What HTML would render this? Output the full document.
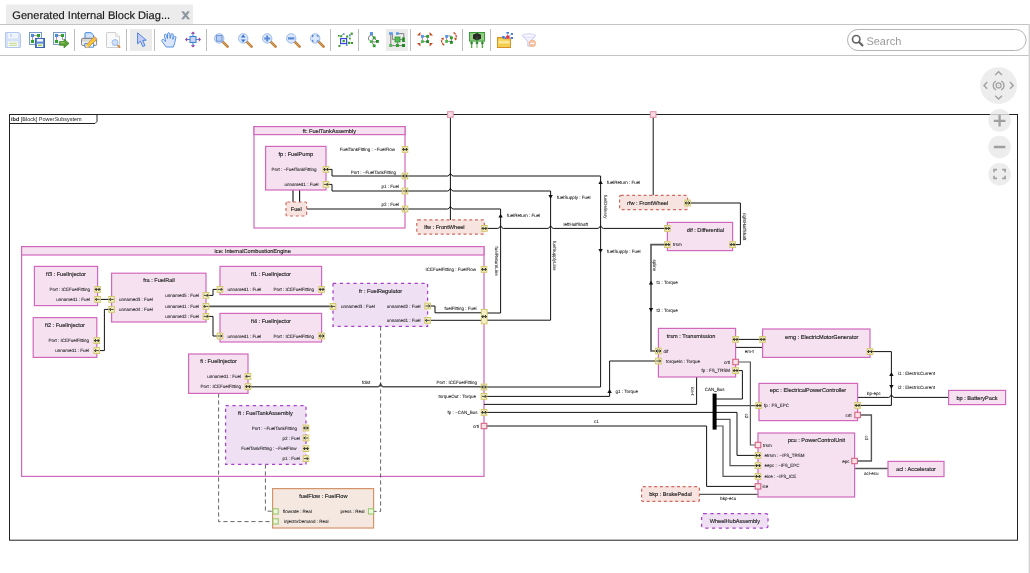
<!DOCTYPE html>
<html><head><meta charset="utf-8"><title>Generated Internal Block Diagram</title>
<style>html,body{margin:0;padding:0;background:#fff;overflow:hidden}body{width:1030px;height:573px;font-family:'Liberation Sans',sans-serif}svg{display:block}svg text{text-rendering:geometricPrecision;font-family:'Liberation Sans',sans-serif}</style></head><body>
<svg width="1030" height="573" viewBox="0 0 1030 573" style="will-change:transform">
<rect x="0" y="0" width="1030" height="573" fill="#fff"/>
<rect x="6" y="5" width="187" height="20" fill="#ececec"/>
<rect x="6" y="4" width="187" height="1" fill="#f7f7f7"/>
<text x="12.3" y="19" font-size="11.1" fill="#1c1c1c" stroke="#1c1c1c" stroke-width="0.18">Generated Internal Block Diag...</text>
<text x="181.4" y="19.1" font-size="13.6" font-weight="bold" fill="#8c949e" stroke="#8c949e" stroke-width="0.4" textLength="8.2" lengthAdjust="spacingAndGlyphs">x</text>
<rect x="0" y="24" width="1030" height="1" fill="#c4c4c4"/>
<rect x="0" y="55" width="1030" height="1" fill="#c4c4c4"/>
<rect x="1028.6" y="24" width="1.4" height="549" fill="#d2d2d2"/>
<rect x="130" y="29" width="22" height="22" fill="#ebebeb"/>
<rect x="386" y="29" width="22" height="22" fill="#ebebeb"/>
<rect x="74" y="29" width="1" height="22" fill="#bdbdbd"/>
<rect x="126" y="29" width="1" height="22" fill="#bdbdbd"/>
<rect x="154" y="29" width="1" height="22" fill="#bdbdbd"/>
<rect x="206" y="29" width="1" height="22" fill="#bdbdbd"/>
<rect x="330" y="29" width="1" height="22" fill="#bdbdbd"/>
<rect x="358" y="29" width="1" height="22" fill="#bdbdbd"/>
<rect x="410" y="29" width="1" height="22" fill="#bdbdbd"/>
<rect x="462" y="29" width="1" height="22" fill="#bdbdbd"/>
<rect x="490" y="29" width="1" height="22" fill="#bdbdbd"/>
<g transform="translate(5 32)"><path d="M0.5 1 Q0.5 0.5 1 0.5 H14 L15.5 2 V15 Q15.5 15.5 15 15.5 H1 Q0.5 15.5 0.5 15z" fill="#d5e1f7" stroke="#b3c6ee" stroke-width="1"/><rect x="3" y="1" width="10" height="5.5" fill="#eef3fc"/><rect x="5.3" y="2" width="1.2" height="3" fill="#b3c6ee"/><rect x="3" y="9.5" width="10" height="5.5" fill="#f6f9ee"/><rect x="4.2" y="10.8" width="7.6" height="1.1" fill="#c4dca0"/><rect x="4.2" y="12.8" width="7.6" height="1.1" fill="#c4dca0"/></g>
<g transform="translate(29 32)"><rect x="0.5" y="0.5" width="12" height="12" fill="#f4f7fc" stroke="#7e9bd0" stroke-width="1"/><path d="M3.5 3.5 H9.5 M3.5 3.5 V9.5 M9.5 3.5 V8" stroke="#a07070" stroke-width="0.7" fill="none"/><rect x="2" y="2" width="3" height="3" fill="#4a8ae0"/><rect x="8" y="2" width="3" height="3" fill="#2ea02e"/><rect x="2" y="8" width="3" height="3" fill="#2ea02e"/><rect x="6.5" y="6.5" width="9" height="9" fill="#5c86d4" stroke="#3c64b4" stroke-width="1"/><rect x="8" y="7" width="6" height="2.6" fill="#f4f7fc"/><rect x="8" y="11.6" width="6" height="3.4" fill="#f0f6e4"/><rect x="9" y="12.7" width="4" height="1.3" fill="#9acd50"/></g>
<g transform="translate(53 32)"><rect x="0.5" y="0.5" width="12" height="12" fill="#f4f7fc" stroke="#7e9bd0" stroke-width="1"/><path d="M3.5 3.5 H9.5 M3.5 3.5 V9.5 M9.5 3.5 V8" stroke="#a07070" stroke-width="0.7" fill="none"/><rect x="2" y="2" width="3" height="3" fill="#4a8ae0"/><rect x="8" y="2" width="3" height="3" fill="#2ea02e"/><rect x="2" y="8" width="3" height="3" fill="#2ea02e"/><path d="M6.5 9.6 H11 V7 L16 11.4 L11 15.8 V13.2 H6.5z" fill="#5aa032" stroke="#3c8420" stroke-width="0.8"/><path d="M7.6 10.8 H11.6" stroke="#a8d080" stroke-width="0.9"/></g>
<g transform="translate(81 32)"><path d="M4 7 V1.5 Q4 0.7 4.8 0.7 H10 L12.6 3.2 V7z" fill="#cfe2fa" stroke="#3f86d8" stroke-width="1"/><path d="M1.6 6.3 H14.6 Q15.6 6.3 15.6 7.3 V12.4 Q15.6 13.4 14.6 13.4 H1.6 Q0.6 13.4 0.6 12.4 V7.3 Q0.6 6.3 1.6 6.3z" fill="#d8d8d8" stroke="#707070" stroke-width="0.9"/><path d="M1 9.6 H15.2 V12.6 H1z" fill="#f4f4f4"/><path d="M3.8 11.4 H12.6 V15.2 H3.8z" fill="#f3f8fe" stroke="#3f86d8" stroke-width="0.9"/><path d="M13.6 4.6 L16 7 L8 15 L4.8 15.8 L5.6 12.6z" fill="#f4c63c" stroke="#d08a28" stroke-width="0.8"/><path d="M13.6 4.6 L16 7 L14.8 8.2 L12.4 5.8z" fill="#f0a880"/><path d="M5.6 12.6 L8 15 L4.8 15.8z" fill="#f6dcb0"/></g>
<g transform="translate(105 32)"><path d="M1.5 1.2 Q1.5 0.5 2.2 0.5 H10.5 L14.5 4.5 V14.8 Q14.5 15.5 13.8 15.5 H2.2 Q1.5 15.5 1.5 14.8z" fill="#fafafa" stroke="#cfcfcf" stroke-width="1"/><path d="M10.5 0.5 V4.5 H14.5" fill="#efefef" stroke="#d6d6d6" stroke-width="0.7"/><circle cx="10" cy="10.6" r="3" fill="#cfe0f8" stroke="#9cbcec" stroke-width="1"/><path d="M13 13.6 L14.6 15.2" stroke="#d0873c" stroke-width="1.8" stroke-linecap="round"/></g>
<g transform="translate(137 32)"><path d="M0.6 0.8 L0.6 11.8 L3.4 9.2 L5.8 14.6 L8 13.6 L5.7 8.4 L9.2 8.2z" fill="#c9cef5" stroke="#4a84e0" stroke-width="1" stroke-linejoin="round"/></g>
<g transform="translate(161 32)"><path d="M5.2 15 L1 9.4 Q0.2 8 1.4 7.4 Q2.4 7 3.2 8 L4.6 9.6 L3.4 3.6 Q3.2 2.4 4.2 2.2 Q5.2 2 5.6 3.2 L6.4 6.6 L6.6 1.8 Q6.7 0.7 7.7 0.7 Q8.7 0.7 8.8 1.8 L9.2 6.4 L10.2 2.4 Q10.5 1.4 11.4 1.6 Q12.3 1.8 12.2 2.9 L11.8 7.4 L13 4.8 Q13.5 3.9 14.3 4.2 Q15.1 4.6 14.9 5.6 L13.8 10.6 L12.4 15z" fill="#dce6fb" stroke="#4a86dc" stroke-width="0.9" stroke-linejoin="round"/></g>
<g transform="translate(185 31.5)"><path d="M8 1.4 V14.6 M1.4 8 H14.6" stroke="#3c8ad8" stroke-width="1.1"/><path d="M8 0 L10.2 2.2 H5.8z M8 16 L10.2 13.8 H5.8z M0 8 L2.2 5.8 V10.2z M16 8 L13.8 5.8 V10.2z" fill="#9c3c9c"/><rect x="5" y="5" width="6" height="6" fill="#cfd0f4" stroke="#3c8ad8" stroke-width="1.1"/></g>
<g transform="translate(214 33)"><path d="M8.6 8.6 L13.6 13.6" stroke="#b87830" stroke-width="2.6" stroke-linecap="round"/><path d="M9 9 L13.4 13.4" stroke="#e0a860" stroke-width="1" stroke-linecap="round"/><circle cx="5.2" cy="5.4" r="4.7" fill="#dbe8fb" stroke="#9cbcec" stroke-width="1"/><rect x="2.4" y="2.6" width="5.6" height="5.6" fill="#b8cdf2" stroke="#6c94d8" stroke-width="1"/></g>
<g transform="translate(238 33)"><path d="M8.6 8.6 L13.6 13.6" stroke="#b87830" stroke-width="2.6" stroke-linecap="round"/><path d="M9 9 L13.4 13.4" stroke="#e0a860" stroke-width="1" stroke-linecap="round"/><circle cx="5.2" cy="5.4" r="4.7" fill="#dbe8fb" stroke="#9cbcec" stroke-width="1"/><path d="M5.2 1.6 L7.6 4.4 H2.8z M5.2 9.2 L7.6 6.4 H2.8z" fill="#3a72cc"/></g>
<g transform="translate(262 33)"><path d="M8.6 8.6 L13.6 13.6" stroke="#b87830" stroke-width="2.6" stroke-linecap="round"/><path d="M9 9 L13.4 13.4" stroke="#e0a860" stroke-width="1" stroke-linecap="round"/><circle cx="5.2" cy="5.4" r="4.7" fill="#dbe8fb" stroke="#9cbcec" stroke-width="1"/><path d="M5.2 2.4 V8.4 M2.2 5.4 H8.2" stroke="#5888d4" stroke-width="2"/></g>
<g transform="translate(286 33)"><path d="M8.6 8.6 L13.6 13.6" stroke="#b87830" stroke-width="2.6" stroke-linecap="round"/><path d="M9 9 L13.4 13.4" stroke="#e0a860" stroke-width="1" stroke-linecap="round"/><circle cx="5.2" cy="5.4" r="4.7" fill="#dbe8fb" stroke="#9cbcec" stroke-width="1"/><path d="M2 5.4 H8.4" stroke="#5888d4" stroke-width="2.2"/></g>
<g transform="translate(310 33)"><path d="M8.6 8.6 L13.6 13.6" stroke="#b87830" stroke-width="2.6" stroke-linecap="round"/><path d="M9 9 L13.4 13.4" stroke="#e0a860" stroke-width="1" stroke-linecap="round"/><circle cx="5.2" cy="5.4" r="4.7" fill="#dbe8fb" stroke="#9cbcec" stroke-width="1"/><path d="M2 2.2 h2.2 l-2.2 2.2z M8.4 2.2 h-2.2 l2.2 2.2z M2 8.6 h2.2 l-2.2 -2.2z M8.4 8.6 h-2.2 l2.2 -2.2z" fill="#3a72cc"/></g>
<g transform="translate(338 32)"><path d="M1 14 L5 10 M9 4.5 L13.5 1.5 M9 4.5 L6 9 M11 10.8 L6 9 M5 2 L3 4.5 L0.6 3.8 M8.4 12.8 L11 10.8 L14 11" stroke="#5aa03c" stroke-width="0.8" fill="none" stroke-dasharray="1.4 1"/><rect x="2.2" y="3.2" width="2" height="2" fill="#3c9a30"/><rect x="0" y="3" width="1.6" height="1.6" fill="#3c9a30"/><rect x="8.2" y="3.6" width="2" height="2" fill="#3c9a30"/><rect x="12.6" y="0.6" width="2.2" height="2.2" fill="#3c9a30"/><rect x="11" y="2.6" width="1.8" height="1.8" fill="#5c8ed8"/><rect x="5" y="1.2" width="1.6" height="1.6" fill="#5c8ed8"/><rect x="10" y="9.8" width="2.2" height="2.2" fill="#3c9a30"/><rect x="13" y="10" width="2" height="2" fill="#3c9a30"/><rect x="0.4" y="13" width="2" height="2" fill="#3c9a30"/><rect x="8" y="12.4" width="1.6" height="1.6" fill="#5c8ed8"/><rect x="11" y="5.6" width="1.8" height="1.8" fill="#3c9a30"/><rect x="2.6" y="6.6" width="6" height="5" fill="#f4f6ff" stroke="#2c3ce0" stroke-width="1.1"/><rect x="4.6" y="8" width="2.2" height="2.2" fill="#3c9a30"/></g>
<g transform="translate(367 32)"><path d="M4.4 2.6 Q0 5 2.2 8.6 M4.4 2.6 L7 6 L4.4 9.6 L7 13.4 M4.4 9.6 L7.4 10 L10.6 9.4 L7 6" stroke="#555" stroke-width="0.8" fill="none"/><rect x="3.2" y="0.4" width="2.6" height="2.6" fill="#5a96e6" stroke="#3c78d0" stroke-width="0.5"/><rect x="5.8" y="4.4" width="2.8" height="2.8" fill="#2ea02e"/><rect x="2.8" y="8.2" width="2.8" height="2.8" fill="#4cb84c"/><rect x="9" y="8" width="2.8" height="2.8" fill="#1e8a1e"/><rect x="5.8" y="12.4" width="2.8" height="2.8" fill="#2ea02e"/></g>
<g transform="translate(389 32)"><path d="M1.8 1.6 V13.6 H15 M8.4 1.6 H14.8 V6 M3.4 2 V7.4 H8 M8.4 8 V13.6 M10 7.6 H13.6" stroke="#777" stroke-width="0.9" fill="none"/><rect x="0" y="0.2" width="3.8" height="2.6" fill="#5a9ae8"/><rect x="7" y="0.2" width="2.8" height="2.6" fill="#5a9ae8"/><rect x="6" y="5" width="5" height="5" fill="#58b858" stroke="#2e9a2e" stroke-width="0.8"/><rect x="13.2" y="5.4" width="2.6" height="4.6" fill="#1e8a1e"/><rect x="0.2" y="12" width="3" height="3" fill="#58b858"/><rect x="7" y="12" width="3" height="3" fill="#2ea02e"/><rect x="13" y="12" width="3" height="3" fill="#1e8a1e"/></g>
<g transform="translate(417 32)"><path d="M0 3.4 L3.4 0 V3.4z M16 3.4 L12.6 0 V3.4z M0 11 L3.4 14.4 V11z M16 11 L12.6 14.4 V11z" fill="#c8461e"/><path d="M5.4 4.4 H10.6 M5.4 4.4 V9.6 H10.6 V4.4" stroke="#666" stroke-width="0.7" fill="none"/><rect x="4" y="3" width="2.8" height="2.8" fill="#5a96e6"/><rect x="9.2" y="3" width="2.8" height="2.8" fill="#2ea02e"/><rect x="4" y="8.2" width="2.8" height="2.8" fill="#4cb84c"/><rect x="9.2" y="8.2" width="2.8" height="2.8" fill="#1e8a1e"/></g>
<g transform="translate(441 32)"><path d="M12.6 0.4 Q16.6 3.4 14.6 7" stroke="#c8461e" stroke-width="1.3" fill="none" stroke-dasharray="2.6 0.7"/><path d="M13.2 5.6 L16 7 L14 8.4z" fill="#c8461e"/><path d="M3.2 13.2 Q-0.8 10 1.4 6.4" stroke="#c8461e" stroke-width="1.3" fill="none" stroke-dasharray="2.6 0.7"/><path d="M0.2 6.6 L3 5.4 L2.4 8z" fill="#c8461e"/><path d="M5.6 4 H10.4 M5.6 4 V9.4 H10.4 V4.6" stroke="#666" stroke-width="0.7" fill="none"/><rect x="4.2" y="3" width="2.8" height="2.8" fill="#5a96e6"/><rect x="9" y="4.4" width="2.8" height="2.8" fill="#2ea02e"/><rect x="4.2" y="8" width="2.8" height="2.8" fill="#4cb84c"/><rect x="9" y="9" width="2.8" height="2.8" fill="#1e8a1e"/></g>
<g transform="translate(469 32)"><path d="M2.6 8 V16 M8 8 V16 M13.4 8 V16" stroke="#5aa84a" stroke-width="1.4"/><path d="M8 12 V16" stroke="#b8dcb0" stroke-width="1.8"/><circle cx="2.6" cy="11" r="1.3" fill="#2e8a2e"/><circle cx="8" cy="11" r="1.3" fill="#2e8a2e"/><circle cx="13.4" cy="11" r="1.3" fill="#2e8a2e"/><rect x="0.5" y="0.5" width="15" height="8.6" fill="#8fd080" stroke="#3c9a3c" stroke-width="1"/><path d="M8 1 L12 2.8 V6.8 L8 8.6 L4 6.8 V2.8z" fill="#2a2a2a"/><path d="M8 4.6 V8.4" stroke="#3c7c3c" stroke-width="0.8"/></g>
<g transform="translate(497 32)"><path d="M0.6 5.6 H5.4 L6.4 6.8 H13.4 V15.4 H0.6z" fill="#f6d65c" stroke="#d89020" stroke-width="1.1"/><path d="M1.6 9 H12.6 V14.6 H1.6z" fill="#fbe89c"/><path d="M1.6 11.6 H12.6 V14.6 H1.6z" fill="#f4cc48"/><path d="M10.6 5.2 L10.6 0.8 M10.6 5.2 L6.4 5.2 M10.6 5.2 L15 1.8 M10.6 5.2 L15 6" stroke="#6c8cd0" stroke-width="0.6"/><rect x="9.4" y="0" width="2.6" height="1.6" fill="#3c78d8"/><rect x="14" y="1" width="2" height="1.8" fill="#3c78d8"/><rect x="14" y="5" width="2" height="2" fill="#3c78d8"/><rect x="5.2" y="4" width="2.4" height="2.2" fill="#3c78d8"/><rect x="7.6" y="5.4" width="1.6" height="1.6" fill="#3c78d8"/><circle cx="10.8" cy="5" r="1.8" fill="#f02c3c"/></g>
<g transform="translate(521 32)"><path d="M1.2 3.4 Q8 0.4 14.8 3.4 L9.4 9.6 V14.2 H6.8 V9.6z" fill="#f3f3ff" stroke="#c4c4f4" stroke-width="1"/><ellipse cx="8" cy="3.6" rx="6.4" ry="1.6" fill="#fafaff" stroke="#d0d0f8" stroke-width="0.7"/><circle cx="11.4" cy="11.4" r="3.2" fill="#f6c4a4" stroke="#f0a880" stroke-width="0.8"/><rect x="9.4" y="10.8" width="4" height="1.3" fill="#fff"/></g>
<rect x="847.5" y="29.5" width="178.6" height="21" rx="10.5" fill="#fff" stroke="#b4b4b4" stroke-width="1"/>
<circle cx="856.2" cy="39.2" r="3.7" fill="none" stroke="#666" stroke-width="1.7"/><path d="M859 42 L862.4 45.4" stroke="#666" stroke-width="2.2" stroke-linecap="round"/>
<text x="866.4" y="44.8" font-size="11" fill="#9a9a9a">Search</text>
<g id="diagram">
<rect x="9.50" y="114.50" width="1008.00" height="425.70" fill="none" stroke="#222" stroke-width="1"/>
<path d="M9.5 123.5 H95 L97 121.5 V114.5" fill="none" stroke="#222" stroke-width="1"/>
<text x="11" y="121.2" font-size="5.5" fill="#222"><tspan font-weight="bold">ibd</tspan> [Block] PowerSubsystem</text>
<rect x="254.00" y="126.60" width="151.00" height="101.40" fill="#fff" stroke="#d268bc" stroke-width="1.2"/>
<rect x="254.00" y="126.60" width="151.00" height="8.00" fill="#f5e1f0" stroke="#d268bc" stroke-width="1.2"/>
<text x="329.40" y="132.82" font-size="5.6" text-anchor="middle" stroke="#222" stroke-width="0.14" fill="#222">ft: FuelTankAssembly</text>
<path d="M326.00 169.40 L332.00 169.40 L332.00 176.00 L405.00 176.00" fill="none" stroke="#111" stroke-width="1" stroke-linejoin="miter"/>
<path d="M326.00 184.40 L332.00 184.40 L332.00 191.00 L405.00 191.00" fill="none" stroke="#111" stroke-width="1" stroke-linejoin="miter"/>
<path d="M293.00 190.00 L293.00 202.00" fill="none" stroke="#111" stroke-width="1.1" stroke-linejoin="miter"/>
<path d="M299.60 190.00 L299.60 202.00" fill="none" stroke="#111" stroke-width="1.1" stroke-linejoin="miter"/>
<path d="M306.60 209.00 L405.00 209.00" fill="none" stroke="#111" stroke-width="1" stroke-linejoin="miter"/>
<rect x="265.60" y="146.40" width="60.40" height="43.60" fill="#f5e1f0" stroke="#d268bc" stroke-width="1.2"/>
<text x="295.80" y="156.02" font-size="5.6" text-anchor="middle" stroke="#222" stroke-width="0.14" fill="#222">fp : FuelPump</text>
<text x="316.60" y="171.02" font-size="4.5" text-anchor="end" stroke="#222" stroke-width="0.07" fill="#222">Port : ~FuelTankFitting</text>
<text x="318.40" y="186.02" font-size="4.5" text-anchor="end" stroke="#222" stroke-width="0.07" fill="#222">unnamed1 : Fuel</text>
<rect x="286.00" y="202.00" width="20.60" height="14.00" fill="#f7e3e0" stroke="#cf6a5c" stroke-width="1.2" stroke-dasharray="3 2.7" rx="1.2"/>
<text x="296.30" y="211.02" font-size="5.6" text-anchor="middle" stroke="#222" stroke-width="0.14" fill="#222">Fuel</text>
<text x="395.00" y="151.02" font-size="4.5" text-anchor="end" stroke="#222" stroke-width="0.07" fill="#222">FuelTankFitting : ~FuelFlow</text>
<text x="396.00" y="173.62" font-size="4.5" text-anchor="end" stroke="#222" stroke-width="0.07" fill="#222">Port : ~FuelTankFitting</text>
<text x="399.00" y="188.02" font-size="4.5" text-anchor="end" stroke="#222" stroke-width="0.07" fill="#222">p1 : Fuel</text>
<text x="399.00" y="206.42" font-size="4.5" text-anchor="end" stroke="#222" stroke-width="0.07" fill="#222">p2 : Fuel</text>
<path d="M450.40 114.50 L450.40 220.00" fill="none" stroke="#111" stroke-width="1" stroke-linejoin="miter"/>
<path d="M653.20 114.50 L653.20 195.40" fill="none" stroke="#111" stroke-width="1" stroke-linejoin="miter"/>
<path d="M405.00 176.00 L447.70 176.00 Q449.10 176.00 450.40 173.30 Q451.70 176.00 453.10 176.00 L600.60 176.00 L600.60 387.00 L484.00 387.00" fill="none" stroke="#111" stroke-width="1" stroke-linejoin="miter"/>
<path d="M405.00 191.00 L447.70 191.00 Q449.10 191.00 450.40 188.30 Q451.70 191.00 453.10 191.00 L550.60 191.00 L550.60 320.20 L484.00 320.20" fill="none" stroke="#111" stroke-width="1" stroke-linejoin="miter"/>
<path d="M405.00 209.00 L447.70 209.00 Q449.10 209.00 450.40 206.30 Q451.70 209.00 453.10 209.00 L500.60 209.00 L500.60 313.00 L484.00 313.00" fill="none" stroke="#111" stroke-width="1" stroke-linejoin="miter"/>
<path d="M484.00 228.40 L497.90 228.40 Q499.30 228.40 500.60 225.70 Q501.90 228.40 503.30 228.40 L547.90 228.40 Q549.30 228.40 550.60 225.70 Q551.90 228.40 553.30 228.40 L597.90 228.40 Q599.30 228.40 600.60 225.70 Q601.90 228.40 603.30 228.40 L667.40 228.40" fill="none" stroke="#111" stroke-width="1" stroke-linejoin="miter"/>
<path d="M687.60 203.00 L740.40 203.00 L740.40 244.60 L732.60 244.60" fill="none" stroke="#111" stroke-width="1" stroke-linejoin="miter"/>
<path d="M667.40 244.60 L651.00 244.60 L651.00 351.00 L658.40 351.00" fill="none" stroke="#555" stroke-width="1.6" stroke-linejoin="miter"/>
<path d="M600.60 180.05 l2.2 3.9 h-4.4z" fill="#111"/>
<text x="607.00" y="183.62" font-size="4.5" text-anchor="start" stroke="#222" stroke-width="0.07" fill="#222">fuelReturn : Fuel</text>
<path d="M600.60 252.95 l2.2 -3.9 h-4.4z" fill="#111"/>
<text x="607.00" y="252.82" font-size="4.5" text-anchor="start" stroke="#222" stroke-width="0.07" fill="#222">fuelSupply : Fuel</text>
<path d="M550.60 198.95 l2.2 -3.9 h-4.4z" fill="#111"/>
<text x="557.00" y="199.02" font-size="4.5" text-anchor="start" stroke="#222" stroke-width="0.07" fill="#222">fuelSupply : Fuel</text>
<path d="M500.60 213.65 l2.2 3.9 h-4.4z" fill="#111"/>
<text x="507.00" y="217.02" font-size="4.5" text-anchor="start" stroke="#222" stroke-width="0.07" fill="#222">fuelReturn : Fuel</text>
<path d="M651.00 280.65 l2.2 3.9 h-4.4z" fill="#111"/>
<text x="656.60" y="284.22" font-size="4.5" text-anchor="start" stroke="#222" stroke-width="0.07" fill="#222">t1 : Torque</text>
<path d="M651.00 311.95 l2.2 -3.9 h-4.4z" fill="#111"/>
<text x="656.60" y="311.82" font-size="4.5" text-anchor="start" stroke="#222" stroke-width="0.07" fill="#222">t2 : Torque</text>
<text x="575.70" y="225.62" font-size="4.5" text-anchor="middle" stroke="#222" stroke-width="0.07" fill="#222">leftHalfShaft</text>
<text x="605.60" y="208.32" font-size="4.5" text-anchor="middle" stroke="#222" stroke-width="0.07" fill="#222" transform="rotate(90 605.60 206.70)">fuelDelivery</text>
<text x="496.40" y="262.82" font-size="4.5" text-anchor="middle" stroke="#222" stroke-width="0.07" fill="#222" transform="rotate(90 496.40 261.20)">fuelReturnLine</text>
<text x="554.50" y="257.32" font-size="4.5" text-anchor="middle" stroke="#222" stroke-width="0.07" fill="#222" transform="rotate(90 554.50 255.70)">fuelSupplyLine</text>
<text x="744.40" y="228.22" font-size="4.5" text-anchor="middle" stroke="#222" stroke-width="0.07" fill="#222" transform="rotate(90 744.40 226.60)">rightHalfShaft</text>
<text x="655.00" y="267.02" font-size="4.5" text-anchor="middle" stroke="#222" stroke-width="0.07" fill="#222" transform="rotate(90 655.00 265.40)">spline</text>
<rect x="416.80" y="219.90" width="67.50" height="14.20" fill="#f7e3e0" stroke="#cf6a5c" stroke-width="1.2" stroke-dasharray="3 2.7" rx="1.2"/>
<text x="444.40" y="229.12" font-size="5.6" text-anchor="middle" stroke="#222" stroke-width="0.14" fill="#222">lfw : FrontWheel</text>
<rect x="619.60" y="195.40" width="68.00" height="14.20" fill="#f7e3e0" stroke="#cf6a5c" stroke-width="1.2" stroke-dasharray="3 2.7" rx="1.2"/>
<text x="647.60" y="205.02" font-size="5.6" text-anchor="middle" stroke="#222" stroke-width="0.14" fill="#222">rfw : FrontWheel</text>
<rect x="667.40" y="222.40" width="65.20" height="28.20" fill="#f5e1f0" stroke="#d268bc" stroke-width="1.2"/>
<text x="705.40" y="232.02" font-size="5.6" text-anchor="middle" stroke="#222" stroke-width="0.14" fill="#222">dif : Differential</text>
<text x="673.00" y="246.22" font-size="4.5" text-anchor="start" stroke="#222" stroke-width="0.07" fill="#222">trsm</text>
<rect x="21.60" y="246.60" width="462.40" height="229.80" fill="#fff" stroke="#d268bc" stroke-width="1.2"/>
<rect x="21.60" y="246.60" width="462.40" height="8.40" fill="#f5e1f0" stroke="#d268bc" stroke-width="1.2"/>
<text x="252.70" y="252.62" font-size="5.6" text-anchor="middle" stroke="#222" stroke-width="0.14" fill="#222">ice: InternalCombustionEngine</text>
<path d="M97.60 299.40 L111.60 299.40" fill="none" stroke="#111" stroke-width="1" stroke-linejoin="miter"/>
<path d="M96.80 350.60 L104.40 350.60 L104.40 309.40 L111.60 309.40" fill="none" stroke="#111" stroke-width="1" stroke-linejoin="miter"/>
<path d="M206.00 295.40 L213.00 295.40 L213.00 289.40 L220.00 289.40" fill="none" stroke="#111" stroke-width="1" stroke-linejoin="miter"/>
<path d="M206.00 306.40 L333.00 306.40" fill="none" stroke="#555" stroke-width="1.6" stroke-linejoin="miter"/>
<path d="M206.00 316.40 L213.00 316.40 L213.00 336.00 L220.00 336.00" fill="none" stroke="#111" stroke-width="1" stroke-linejoin="miter"/>
<path d="M427.60 306.00 L435.00 306.00 L435.00 312.80 L484.00 312.80" fill="none" stroke="#111" stroke-width="1" stroke-linejoin="miter"/>
<path d="M427.60 320.30 L484.00 320.30" fill="none" stroke="#111" stroke-width="1" stroke-linejoin="miter"/>
<path d="M248.00 386.80 L377.90 386.80 Q379.30 386.80 380.60 384.10 Q381.90 386.80 383.30 386.80 L484.00 386.80" fill="none" stroke="#555" stroke-width="1.6" stroke-linejoin="miter"/>
<path d="M380.60 326.40 L380.60 511.40 L373.60 511.40" fill="none" stroke="#333" stroke-width="0.75" stroke-dasharray="4.2 2.8" stroke-linejoin="miter"/>
<path d="M218.60 393.40 L218.60 521.60 L272.60 521.60" fill="none" stroke="#333" stroke-width="0.75" stroke-dasharray="4.2 2.8" stroke-linejoin="miter"/>
<path d="M265.40 464.40 L265.40 511.20 L272.60 511.20" fill="none" stroke="#333" stroke-width="0.75" stroke-dasharray="4.2 2.8" stroke-linejoin="miter"/>
<rect x="34.40" y="266.40" width="63.20" height="39.20" fill="#f5e1f0" stroke="#d268bc" stroke-width="1.2"/>
<text x="66.00" y="276.02" font-size="5.6" text-anchor="middle" stroke="#222" stroke-width="0.14" fill="#222">fi3 : FuelInjector</text>
<text x="90.00" y="291.02" font-size="4.5" text-anchor="end" stroke="#222" stroke-width="0.07" fill="#222">Port : ICEFuelFitting</text>
<text x="90.00" y="301.02" font-size="4.5" text-anchor="end" stroke="#222" stroke-width="0.07" fill="#222">unnamed1 : Fuel</text>
<rect x="33.20" y="317.60" width="63.60" height="39.80" fill="#f5e1f0" stroke="#d268bc" stroke-width="1.2"/>
<text x="65.00" y="327.02" font-size="5.6" text-anchor="middle" stroke="#222" stroke-width="0.14" fill="#222">fi2 : FuelInjector</text>
<text x="89.00" y="342.22" font-size="4.5" text-anchor="end" stroke="#222" stroke-width="0.07" fill="#222">Port : ICEFuelFitting</text>
<text x="89.00" y="352.22" font-size="4.5" text-anchor="end" stroke="#222" stroke-width="0.07" fill="#222">unnamed1 : Fuel</text>
<rect x="111.60" y="273.20" width="94.40" height="48.80" fill="#f5e1f0" stroke="#d268bc" stroke-width="1.2"/>
<text x="159.00" y="282.02" font-size="5.6" text-anchor="middle" stroke="#222" stroke-width="0.14" fill="#222">fra : FuelRail</text>
<text x="119.00" y="301.02" font-size="4.5" text-anchor="start" stroke="#222" stroke-width="0.07" fill="#222">unnamed3 : Fuel</text>
<text x="119.00" y="311.22" font-size="4.5" text-anchor="start" stroke="#222" stroke-width="0.07" fill="#222">unnamed4 : Fuel</text>
<text x="199.00" y="297.02" font-size="4.5" text-anchor="end" stroke="#222" stroke-width="0.07" fill="#222">unnamed5 : Fuel</text>
<text x="199.00" y="308.02" font-size="4.5" text-anchor="end" stroke="#222" stroke-width="0.07" fill="#222">unnamed1 : Fuel</text>
<text x="199.00" y="318.02" font-size="4.5" text-anchor="end" stroke="#222" stroke-width="0.07" fill="#222">unnamed2 : Fuel</text>
<rect x="220.00" y="266.40" width="101.60" height="28.20" fill="#f5e1f0" stroke="#d268bc" stroke-width="1.2"/>
<text x="271.00" y="276.02" font-size="5.6" text-anchor="middle" stroke="#222" stroke-width="0.14" fill="#222">fi1 : FuelInjector</text>
<text x="227.40" y="291.02" font-size="4.5" text-anchor="start" stroke="#222" stroke-width="0.07" fill="#222">unnamed1 : Fuel</text>
<text x="314.00" y="291.02" font-size="4.5" text-anchor="end" stroke="#222" stroke-width="0.07" fill="#222">Port : ICEFuelFitting</text>
<rect x="220.00" y="313.40" width="101.60" height="28.60" fill="#f5e1f0" stroke="#d268bc" stroke-width="1.2"/>
<text x="271.00" y="323.02" font-size="5.6" text-anchor="middle" stroke="#222" stroke-width="0.14" fill="#222">fi4 : FuelInjector</text>
<text x="227.40" y="337.62" font-size="4.5" text-anchor="start" stroke="#222" stroke-width="0.07" fill="#222">unnamed1 : Fuel</text>
<text x="314.00" y="337.62" font-size="4.5" text-anchor="end" stroke="#222" stroke-width="0.07" fill="#222">Port : ICEFuelFitting</text>
<rect x="333.00" y="283.40" width="94.60" height="43.00" fill="#efe0f4" stroke="#a840cc" stroke-width="1.25" stroke-dasharray="3.2 3.6"/>
<text x="380.60" y="293.02" font-size="5.6" text-anchor="middle" stroke="#222" stroke-width="0.14" fill="#222">fr : FuelRegulator</text>
<text x="341.00" y="308.02" font-size="4.5" text-anchor="start" stroke="#222" stroke-width="0.07" fill="#222">unnamed3 : Fuel</text>
<text x="420.60" y="307.82" font-size="4.5" text-anchor="end" stroke="#222" stroke-width="0.07" fill="#222">unnamed2 : Fuel</text>
<text x="420.60" y="322.02" font-size="4.5" text-anchor="end" stroke="#222" stroke-width="0.07" fill="#222">unnamed1 : Fuel</text>
<rect x="188.60" y="354.00" width="59.40" height="39.40" fill="#f5e1f0" stroke="#d268bc" stroke-width="1.2"/>
<text x="218.50" y="363.02" font-size="5.6" text-anchor="middle" stroke="#222" stroke-width="0.14" fill="#222">fi : FuelInjector</text>
<text x="241.00" y="378.02" font-size="4.5" text-anchor="end" stroke="#222" stroke-width="0.07" fill="#222">unnamed1 : Fuel</text>
<text x="241.00" y="388.22" font-size="4.5" text-anchor="end" stroke="#222" stroke-width="0.07" fill="#222">Port : ICEFuelFitting</text>
<rect x="225.60" y="405.60" width="80.40" height="58.80" fill="#efe0f4" stroke="#a840cc" stroke-width="1.25" stroke-dasharray="3.2 3.6"/>
<text x="265.40" y="415.02" font-size="5.6" text-anchor="middle" stroke="#222" stroke-width="0.14" fill="#222">ft : FuelTankAssembly</text>
<text x="297.00" y="429.62" font-size="4.5" text-anchor="end" stroke="#222" stroke-width="0.07" fill="#222">Port : ~FuelTankFitting</text>
<text x="300.00" y="439.62" font-size="4.5" text-anchor="end" stroke="#222" stroke-width="0.07" fill="#222">p2 : Fuel</text>
<text x="296.40" y="450.22" font-size="4.5" text-anchor="end" stroke="#222" stroke-width="0.07" fill="#222">FuelTankFitting : ~FuelFlow</text>
<text x="300.00" y="460.22" font-size="4.5" text-anchor="end" stroke="#222" stroke-width="0.07" fill="#222">p1 : Fuel</text>
<text x="476.00" y="271.02" font-size="4.5" text-anchor="end" stroke="#222" stroke-width="0.07" fill="#222">ICEFuelFitting : FuelFlow</text>
<text x="476.60" y="309.82" font-size="4.5" text-anchor="end" stroke="#222" stroke-width="0.07" fill="#222">fuelFitting : Fuel</text>
<text x="477.00" y="383.82" font-size="4.5" text-anchor="end" stroke="#222" stroke-width="0.07" fill="#222">Port : ICEFuelFitting</text>
<text x="476.00" y="398.02" font-size="4.5" text-anchor="end" stroke="#222" stroke-width="0.07" fill="#222">torqueOut : Torque</text>
<text x="477.40" y="414.02" font-size="4.5" text-anchor="end" stroke="#222" stroke-width="0.07" fill="#222">fp : ~CAN_Bus</text>
<text x="479.00" y="427.62" font-size="4.5" text-anchor="end" stroke="#222" stroke-width="0.07" fill="#222">crtl</text>
<text x="366.20" y="383.82" font-size="4.5" text-anchor="middle" stroke="#222" stroke-width="0.07" fill="#222">fdist</text>
<rect x="272.60" y="488.60" width="101.00" height="39.40" fill="#f5e8e0" stroke="#d4946a" stroke-width="1.2"/>
<text x="323.40" y="498.02" font-size="5.6" text-anchor="middle" stroke="#222" stroke-width="0.14" fill="#222">fuelFlow : FuelFlow</text>
<text x="283.00" y="513.02" font-size="4.5" text-anchor="start" stroke="#222" stroke-width="0.07" fill="#222">flowrate : Real</text>
<text x="284.00" y="523.02" font-size="4.5" text-anchor="start" stroke="#222" stroke-width="0.07" fill="#222">injectorDemand : Real</text>
<text x="364.60" y="513.02" font-size="4.5" text-anchor="end" stroke="#222" stroke-width="0.07" fill="#222">press : Real</text>
<path d="M484.00 396.40 L609.60 396.40 L609.60 361.00 L658.40 361.00" fill="none" stroke="#111" stroke-width="1" stroke-linejoin="miter"/>
<path d="M609.60 389.05 l2.2 3.9 h-4.4z" fill="#111"/>
<text x="615.60" y="392.62" font-size="4.5" text-anchor="start" stroke="#222" stroke-width="0.07" fill="#222">g1 : Torque</text>
<path d="M484.00 404.40 L696.60 404.40 L696.60 377.00" fill="none" stroke="#111" stroke-width="1" stroke-linejoin="miter"/>
<path d="M484.00 412.40 L737.00 412.40 L737.00 455.40 L758.00 455.40" fill="none" stroke="#111" stroke-width="1" stroke-linejoin="miter"/>
<path d="M484.00 426.00 L706.60 426.00 L706.60 486.40 L758.00 486.40" fill="none" stroke="#111" stroke-width="1" stroke-linejoin="miter"/>
<text x="596.50" y="423.42" font-size="4.5" text-anchor="middle" stroke="#222" stroke-width="0.07" fill="#222">c1</text>
<path d="M735.60 339.40 L762.60 339.40" fill="none" stroke="#111" stroke-width="1" stroke-linejoin="miter"/>
<path d="M735.60 347.40 L762.60 347.40" fill="none" stroke="#111" stroke-width="1" stroke-linejoin="miter"/>
<text x="749.30" y="353.22" font-size="4.5" text-anchor="middle" stroke="#222" stroke-width="0.07" fill="#222">em-t</text>
<path d="M735.60 370.60 L742.40 370.60 L742.40 399.00 L714.60 399.00" fill="none" stroke="#111" stroke-width="1" stroke-linejoin="miter"/>
<path d="M735.60 362.00 L750.40 362.00 L750.40 445.00 L758.00 445.00" fill="none" stroke="#555" stroke-width="1.2" stroke-linejoin="miter"/>
<text x="746.40" y="417.62" font-size="4.5" text-anchor="middle" stroke="#222" stroke-width="0.07" fill="#222" transform="rotate(90 746.40 416.00)">c2</text>
<path d="M714.60 405.60 L758.60 405.60" fill="none" stroke="#555" stroke-width="1.4" stroke-linejoin="miter"/>
<path d="M714.60 419.40 L730.00 419.40 L730.00 465.60 L758.00 465.60" fill="none" stroke="#555" stroke-width="1.2" stroke-linejoin="miter"/>
<path d="M714.60 426.00 L723.00 426.00 L723.00 476.40 L758.00 476.40" fill="none" stroke="#555" stroke-width="1.2" stroke-linejoin="miter"/>
<path d="M699.40 494.40 L758.00 494.40" fill="none" stroke="#555" stroke-width="1.2" stroke-linejoin="miter"/>
<text x="728.30" y="500.22" font-size="4.5" text-anchor="middle" stroke="#222" stroke-width="0.07" fill="#222">bkp-ecu</text>
<path d="M870.00 351.60 L891.40 351.60 L891.40 405.40 L857.60 405.40" fill="none" stroke="#111" stroke-width="1" stroke-linejoin="miter"/>
<path d="M891.40 372.05 l2.2 3.9 h-4.4z" fill="#111"/>
<text x="898.00" y="375.12" font-size="4.5" text-anchor="start" stroke="#222" stroke-width="0.07" fill="#222">i1 : ElectricCurrent</text>
<path d="M891.40 388.95 l2.2 -3.9 h-4.4z" fill="#111"/>
<text x="898.00" y="388.82" font-size="4.5" text-anchor="start" stroke="#222" stroke-width="0.07" fill="#222">i2 : ElectricCurrent</text>
<path d="M857.60 397.40 L888.70 397.40 Q890.10 397.40 891.40 394.70 Q892.70 397.40 894.10 397.40 L948.60 397.40" fill="none" stroke="#111" stroke-width="1" stroke-linejoin="miter"/>
<text x="874.00" y="395.02" font-size="4.5" text-anchor="middle" stroke="#222" stroke-width="0.07" fill="#222">bp-epc</text>
<path d="M857.60 415.00 L871.40 415.00 L871.40 461.00 L854.60 461.00" fill="none" stroke="#555" stroke-width="1.4" stroke-linejoin="miter"/>
<text x="866.40" y="439.62" font-size="4.5" text-anchor="middle" stroke="#222" stroke-width="0.07" fill="#222" transform="rotate(90 866.40 438.00)">c3</text>
<path d="M854.60 468.60 L888.00 468.60" fill="none" stroke="#555" stroke-width="1.5" stroke-linejoin="miter"/>
<text x="871.20" y="475.02" font-size="4.5" text-anchor="middle" stroke="#222" stroke-width="0.07" fill="#222">acl-ecu</text>
<text x="692.60" y="392.92" font-size="4.5" text-anchor="middle" stroke="#222" stroke-width="0.07" fill="#222" transform="rotate(90 692.60 391.30)">ice-t</text>
<rect x="712.60" y="393.60" width="4.00" height="36.00" fill="#000" stroke="none" stroke-width="0"/>
<text x="714.70" y="391.02" font-size="4.5" text-anchor="middle" stroke="#222" stroke-width="0.07" fill="#222">CAN_Bus</text>
<rect x="658.40" y="328.40" width="77.20" height="48.60" fill="#f5e1f0" stroke="#d268bc" stroke-width="1.2"/>
<text x="691.00" y="338.02" font-size="5.6" text-anchor="middle" stroke="#222" stroke-width="0.14" fill="#222">trsm : Transmission</text>
<text x="663.40" y="352.62" font-size="4.5" text-anchor="start" stroke="#222" stroke-width="0.07" fill="#222">dif</text>
<text x="666.00" y="362.62" font-size="4.5" text-anchor="start" stroke="#222" stroke-width="0.07" fill="#222">torqueIn : Torque</text>
<text x="730.00" y="363.62" font-size="4.5" text-anchor="end" stroke="#222" stroke-width="0.07" fill="#222">crtl</text>
<text x="730.00" y="372.22" font-size="4.5" text-anchor="end" stroke="#222" stroke-width="0.07" fill="#222">fp : FS_TRSM</text>
<rect x="762.60" y="329.00" width="107.40" height="28.40" fill="#f5e1f0" stroke="#d268bc" stroke-width="1.2"/>
<text x="821.80" y="339.02" font-size="5.6" text-anchor="middle" stroke="#222" stroke-width="0.14" fill="#222">emg : ElectricMotorGenerator</text>
<rect x="759.00" y="383.40" width="98.60" height="37.20" fill="#f5e1f0" stroke="#d268bc" stroke-width="1.2"/>
<text x="808.00" y="392.32" font-size="5.6" text-anchor="middle" stroke="#222" stroke-width="0.14" fill="#222">epc : ElectricalPowerController</text>
<text x="764.00" y="407.22" font-size="4.5" text-anchor="start" stroke="#222" stroke-width="0.07" fill="#222">fp : FS_EPC</text>
<text x="851.60" y="416.62" font-size="4.5" text-anchor="end" stroke="#222" stroke-width="0.07" fill="#222">crtl</text>
<rect x="758.00" y="433.00" width="96.60" height="64.00" fill="#f5e1f0" stroke="#d268bc" stroke-width="1.2"/>
<text x="816.40" y="442.32" font-size="5.6" text-anchor="middle" stroke="#222" stroke-width="0.14" fill="#222">pcu : PowerControlUnit</text>
<text x="763.00" y="446.62" font-size="4.5" text-anchor="start" stroke="#222" stroke-width="0.07" fill="#222">trsm</text>
<text x="764.60" y="457.02" font-size="4.5" text-anchor="start" stroke="#222" stroke-width="0.07" fill="#222">etrsm : ~IFS_TRSM</text>
<text x="764.60" y="467.22" font-size="4.5" text-anchor="start" stroke="#222" stroke-width="0.07" fill="#222">eepc : ~IFS_EPC</text>
<text x="764.60" y="478.02" font-size="4.5" text-anchor="start" stroke="#222" stroke-width="0.07" fill="#222">eice : ~IFS_ICE</text>
<text x="762.60" y="488.02" font-size="4.5" text-anchor="start" stroke="#222" stroke-width="0.07" fill="#222">ice</text>
<text x="849.60" y="462.62" font-size="4.5" text-anchor="end" stroke="#222" stroke-width="0.07" fill="#222">epc</text>
<rect x="948.60" y="390.40" width="57.00" height="14.20" fill="#f5e1f0" stroke="#d268bc" stroke-width="1.2"/>
<text x="977.00" y="399.82" font-size="5.6" text-anchor="middle" stroke="#222" stroke-width="0.14" fill="#222">bp : BatteryPack</text>
<rect x="888.00" y="461.40" width="56.00" height="15.20" fill="#f5e1f0" stroke="#d268bc" stroke-width="1.2"/>
<text x="916.00" y="471.02" font-size="5.6" text-anchor="middle" stroke="#222" stroke-width="0.14" fill="#222">acl : Accelerator</text>
<rect x="641.60" y="486.60" width="57.80" height="14.80" fill="#f7e3e0" stroke="#cf6a5c" stroke-width="1.2" stroke-dasharray="3 2.7" rx="1.2"/>
<text x="670.50" y="496.02" font-size="5.6" text-anchor="middle" stroke="#222" stroke-width="0.14" fill="#222">bkp : BrakePedal</text>
<rect x="701.60" y="513.60" width="66.40" height="14.40" fill="#efe0f4" stroke="#a840cc" stroke-width="1.25" stroke-dasharray="3.2 3.6" rx="2"/>
<text x="734.90" y="523.02" font-size="5.6" text-anchor="middle" stroke="#222" stroke-width="0.14" fill="#222">WheelHubAssembly</text>
<rect x="447.60" y="111.70" width="5.60" height="5.60" fill="#f9dbe3" stroke="#e08ea6" stroke-width="1"/>
<rect x="650.40" y="111.70" width="5.60" height="5.60" fill="#f9dbe3" stroke="#e08ea6" stroke-width="1"/>
<rect x="323.20" y="166.50" width="5.60" height="5.80" fill="#f4f0c4" stroke="#d4c86c" stroke-width="1"/>
<path d="M325.10 167.90 L323.70 169.40 L325.10 170.90 M326.90 167.90 L328.30 169.40 L326.90 170.90 M323.80 169.40 H328.20" stroke="#000" stroke-width="0.8" fill="none" stroke-linejoin="miter"/>
<rect x="323.20" y="181.50" width="5.60" height="5.80" fill="#f4f0c4" stroke="#d4c86c" stroke-width="1"/>
<path d="M326.70 182.90 L328.20 184.40 L326.70 185.90 M323.90 184.40 H328.10" stroke="#000" stroke-width="0.7" fill="none"/>
<rect x="402.20" y="146.50" width="5.60" height="5.80" fill="#f4f0c4" stroke="#d4c86c" stroke-width="1"/>
<path d="M404.10 147.90 L402.70 149.40 L404.10 150.90 M405.90 147.90 L407.30 149.40 L405.90 150.90 M402.80 149.40 H407.20" stroke="#000" stroke-width="0.8" fill="none" stroke-linejoin="miter"/>
<rect x="402.20" y="173.10" width="5.60" height="5.80" fill="#f4f0c4" stroke="#d4c86c" stroke-width="1"/>
<path d="M404.10 174.50 L402.70 176.00 L404.10 177.50 M405.90 174.50 L407.30 176.00 L405.90 177.50 M402.80 176.00 H407.20" stroke="#000" stroke-width="0.8" fill="none" stroke-linejoin="miter"/>
<rect x="402.20" y="188.10" width="5.60" height="5.80" fill="#f4f0c4" stroke="#d4c86c" stroke-width="1"/>
<path d="M405.70 189.50 L407.20 191.00 L405.70 192.50 M402.90 191.00 H407.10" stroke="#000" stroke-width="0.7" fill="none"/>
<rect x="402.20" y="206.10" width="5.60" height="5.80" fill="#f4f0c4" stroke="#d4c86c" stroke-width="1"/>
<path d="M404.30 207.50 L402.80 209.00 L404.30 210.50 M402.90 209.00 H407.10" stroke="#000" stroke-width="0.7" fill="none"/>
<rect x="481.60" y="225.50" width="5.60" height="5.80" fill="#f4f0c4" stroke="#d4c86c" stroke-width="1"/>
<path d="M483.50 226.90 L482.10 228.40 L483.50 229.90 M485.30 226.90 L486.70 228.40 L485.30 229.90 M482.20 228.40 H486.60" stroke="#000" stroke-width="0.8" fill="none" stroke-linejoin="miter"/>
<rect x="684.80" y="200.10" width="5.60" height="5.80" fill="#f4f0c4" stroke="#d4c86c" stroke-width="1"/>
<path d="M686.70 201.50 L685.30 203.00 L686.70 204.50 M688.50 201.50 L689.90 203.00 L688.50 204.50 M685.40 203.00 H689.80" stroke="#000" stroke-width="0.8" fill="none" stroke-linejoin="miter"/>
<rect x="664.60" y="225.50" width="5.60" height="5.80" fill="#f4f0c4" stroke="#d4c86c" stroke-width="1"/>
<path d="M666.50 226.90 L665.10 228.40 L666.50 229.90 M668.30 226.90 L669.70 228.40 L668.30 229.90 M665.20 228.40 H669.60" stroke="#000" stroke-width="0.8" fill="none" stroke-linejoin="miter"/>
<rect x="664.60" y="241.70" width="5.60" height="5.80" fill="#f4f0c4" stroke="#d4c86c" stroke-width="1"/>
<path d="M666.50 243.10 L665.10 244.60 L666.50 246.10 M668.30 243.10 L669.70 244.60 L668.30 246.10 M665.20 244.60 H669.60" stroke="#000" stroke-width="0.8" fill="none" stroke-linejoin="miter"/>
<rect x="729.80" y="241.70" width="5.60" height="5.80" fill="#f4f0c4" stroke="#d4c86c" stroke-width="1"/>
<path d="M731.70 243.10 L730.30 244.60 L731.70 246.10 M733.50 243.10 L734.90 244.60 L733.50 246.10 M730.40 244.60 H734.80" stroke="#000" stroke-width="0.8" fill="none" stroke-linejoin="miter"/>
<rect x="94.80" y="286.50" width="5.60" height="5.80" fill="#f4f0c4" stroke="#d4c86c" stroke-width="1"/>
<path d="M96.70 287.90 L95.30 289.40 L96.70 290.90 M98.50 287.90 L99.90 289.40 L98.50 290.90 M95.40 289.40 H99.80" stroke="#000" stroke-width="0.8" fill="none" stroke-linejoin="miter"/>
<rect x="94.80" y="296.50" width="5.60" height="5.80" fill="#f4f0c4" stroke="#d4c86c" stroke-width="1"/>
<path d="M96.90 297.90 L95.40 299.40 L96.90 300.90 M95.50 299.40 H99.70" stroke="#000" stroke-width="0.7" fill="none"/>
<rect x="94.00" y="337.70" width="5.60" height="5.80" fill="#f4f0c4" stroke="#d4c86c" stroke-width="1"/>
<path d="M95.90 339.10 L94.50 340.60 L95.90 342.10 M97.70 339.10 L99.10 340.60 L97.70 342.10 M94.60 340.60 H99.00" stroke="#000" stroke-width="0.8" fill="none" stroke-linejoin="miter"/>
<rect x="94.00" y="347.70" width="5.60" height="5.80" fill="#f4f0c4" stroke="#d4c86c" stroke-width="1"/>
<path d="M96.10 349.10 L94.60 350.60 L96.10 352.10 M94.70 350.60 H98.90" stroke="#000" stroke-width="0.7" fill="none"/>
<rect x="108.80" y="296.50" width="5.60" height="5.80" fill="#f4f0c4" stroke="#d4c86c" stroke-width="1"/>
<path d="M110.90 297.90 L109.40 299.40 L110.90 300.90 M109.50 299.40 H113.70" stroke="#000" stroke-width="0.7" fill="none"/>
<rect x="108.80" y="306.50" width="5.60" height="5.80" fill="#f4f0c4" stroke="#d4c86c" stroke-width="1"/>
<path d="M110.90 307.90 L109.40 309.40 L110.90 310.90 M109.50 309.40 H113.70" stroke="#000" stroke-width="0.7" fill="none"/>
<rect x="203.20" y="292.50" width="5.60" height="5.80" fill="#f4f0c4" stroke="#d4c86c" stroke-width="1"/>
<path d="M206.70 293.90 L208.20 295.40 L206.70 296.90 M203.90 295.40 H208.10" stroke="#000" stroke-width="0.7" fill="none"/>
<rect x="203.20" y="303.50" width="5.60" height="5.80" fill="#f4f0c4" stroke="#d4c86c" stroke-width="1"/>
<path d="M205.30 304.90 L203.80 306.40 L205.30 307.90 M203.90 306.40 H208.10" stroke="#000" stroke-width="0.7" fill="none"/>
<rect x="203.20" y="313.50" width="5.60" height="5.80" fill="#f4f0c4" stroke="#d4c86c" stroke-width="1"/>
<path d="M206.70 314.90 L208.20 316.40 L206.70 317.90 M203.90 316.40 H208.10" stroke="#000" stroke-width="0.7" fill="none"/>
<rect x="217.20" y="286.50" width="5.60" height="5.80" fill="#f4f0c4" stroke="#d4c86c" stroke-width="1"/>
<path d="M220.70 287.90 L222.20 289.40 L220.70 290.90 M217.90 289.40 H222.10" stroke="#000" stroke-width="0.7" fill="none"/>
<rect x="318.80" y="286.50" width="5.60" height="5.80" fill="#f4f0c4" stroke="#d4c86c" stroke-width="1"/>
<path d="M320.70 287.90 L319.30 289.40 L320.70 290.90 M322.50 287.90 L323.90 289.40 L322.50 290.90 M319.40 289.40 H323.80" stroke="#000" stroke-width="0.8" fill="none" stroke-linejoin="miter"/>
<rect x="217.20" y="333.10" width="5.60" height="5.80" fill="#f4f0c4" stroke="#d4c86c" stroke-width="1"/>
<path d="M220.70 334.50 L222.20 336.00 L220.70 337.50 M217.90 336.00 H222.10" stroke="#000" stroke-width="0.7" fill="none"/>
<rect x="318.80" y="333.10" width="5.60" height="5.80" fill="#f4f0c4" stroke="#d4c86c" stroke-width="1"/>
<path d="M320.70 334.50 L319.30 336.00 L320.70 337.50 M322.50 334.50 L323.90 336.00 L322.50 337.50 M319.40 336.00 H323.80" stroke="#000" stroke-width="0.8" fill="none" stroke-linejoin="miter"/>
<rect x="330.20" y="303.50" width="5.60" height="5.80" fill="#f4f0c4" stroke="#d4c86c" stroke-width="1"/>
<path d="M332.30 304.90 L330.80 306.40 L332.30 307.90 M330.90 306.40 H335.10" stroke="#000" stroke-width="0.7" fill="none"/>
<rect x="424.80" y="303.10" width="5.60" height="5.80" fill="#f4f0c4" stroke="#d4c86c" stroke-width="1"/>
<path d="M428.30 304.50 L429.80 306.00 L428.30 307.50 M425.50 306.00 H429.70" stroke="#000" stroke-width="0.7" fill="none"/>
<rect x="424.80" y="317.50" width="5.60" height="5.80" fill="#f4f0c4" stroke="#d4c86c" stroke-width="1"/>
<path d="M426.90 318.90 L425.40 320.40 L426.90 321.90 M425.50 320.40 H429.70" stroke="#000" stroke-width="0.7" fill="none"/>
<rect x="245.20" y="373.50" width="5.60" height="5.80" fill="#f4f0c4" stroke="#d4c86c" stroke-width="1"/>
<path d="M247.30 374.90 L245.80 376.40 L247.30 377.90 M245.90 376.40 H250.10" stroke="#000" stroke-width="0.7" fill="none"/>
<rect x="245.20" y="383.70" width="5.60" height="5.80" fill="#f4f0c4" stroke="#d4c86c" stroke-width="1"/>
<path d="M247.10 385.10 L245.70 386.60 L247.10 388.10 M248.90 385.10 L250.30 386.60 L248.90 388.10 M245.80 386.60 H250.20" stroke="#000" stroke-width="0.8" fill="none" stroke-linejoin="miter"/>
<rect x="303.20" y="425.10" width="5.60" height="5.80" fill="#f4f0c4" stroke="#d4c86c" stroke-width="1"/>
<path d="M305.10 426.50 L303.70 428.00 L305.10 429.50 M306.90 426.50 L308.30 428.00 L306.90 429.50 M303.80 428.00 H308.20" stroke="#000" stroke-width="0.8" fill="none" stroke-linejoin="miter"/>
<rect x="303.20" y="435.10" width="5.60" height="5.80" fill="#f4f0c4" stroke="#d4c86c" stroke-width="1"/>
<path d="M305.30 436.50 L303.80 438.00 L305.30 439.50 M303.90 438.00 H308.10" stroke="#000" stroke-width="0.7" fill="none"/>
<rect x="303.20" y="445.70" width="5.60" height="5.80" fill="#f4f0c4" stroke="#d4c86c" stroke-width="1"/>
<path d="M305.10 447.10 L303.70 448.60 L305.10 450.10 M306.90 447.10 L308.30 448.60 L306.90 450.10 M303.80 448.60 H308.20" stroke="#000" stroke-width="0.8" fill="none" stroke-linejoin="miter"/>
<rect x="303.20" y="455.70" width="5.60" height="5.80" fill="#f4f0c4" stroke="#d4c86c" stroke-width="1"/>
<path d="M306.70 457.10 L308.20 458.60 L306.70 460.10 M303.90 458.60 H308.10" stroke="#000" stroke-width="0.7" fill="none"/>
<rect x="481.20" y="266.50" width="5.60" height="5.80" fill="#f4f0c4" stroke="#d4c86c" stroke-width="1"/>
<path d="M483.10 267.90 L481.70 269.40 L483.10 270.90 M484.90 267.90 L486.30 269.40 L484.90 270.90 M481.80 269.40 H486.20" stroke="#000" stroke-width="0.8" fill="none" stroke-linejoin="miter"/>
<rect x="481.40" y="309.40" width="5.70" height="14.40" fill="#f4f0c4" stroke="#d4c86c" stroke-width="1"/>
<path d="M483.30 315.10 L481.90 316.60 L483.30 318.10 M485.10 315.10 L486.50 316.60 L485.10 318.10 M482.00 316.60 H486.40" stroke="#000" stroke-width="0.8" fill="none" stroke-linejoin="miter"/>
<rect x="481.20" y="384.10" width="5.60" height="5.80" fill="#f4f0c4" stroke="#d4c86c" stroke-width="1"/>
<path d="M483.10 385.50 L481.70 387.00 L483.10 388.50 M484.90 385.50 L486.30 387.00 L484.90 388.50 M481.80 387.00 H486.20" stroke="#000" stroke-width="0.8" fill="none" stroke-linejoin="miter"/>
<rect x="481.20" y="393.50" width="5.60" height="5.80" fill="#f4f0c4" stroke="#d4c86c" stroke-width="1"/>
<path d="M484.70 394.90 L486.20 396.40 L484.70 397.90 M481.90 396.40 H486.10" stroke="#000" stroke-width="0.7" fill="none"/>
<rect x="481.20" y="409.50" width="5.60" height="5.80" fill="#f4f0c4" stroke="#d4c86c" stroke-width="1"/>
<path d="M483.10 410.90 L481.70 412.40 L483.10 413.90 M484.90 410.90 L486.30 412.40 L484.90 413.90 M481.80 412.40 H486.20" stroke="#000" stroke-width="0.8" fill="none" stroke-linejoin="miter"/>
<rect x="481.20" y="423.30" width="5.60" height="5.40" fill="#f8e1e7" stroke="#d66484" stroke-width="1.1"/>
<rect x="273.00" y="508.80" width="5.20" height="5.20" fill="#eef5e0" stroke="#90c860" stroke-width="1"/>
<rect x="273.00" y="518.80" width="5.20" height="5.20" fill="#eef5e0" stroke="#90c860" stroke-width="1"/>
<rect x="368.40" y="508.80" width="5.20" height="5.20" fill="#eef5e0" stroke="#90c860" stroke-width="1"/>
<rect x="655.60" y="348.10" width="5.60" height="5.80" fill="#f4f0c4" stroke="#d4c86c" stroke-width="1"/>
<path d="M657.50 349.50 L656.10 351.00 L657.50 352.50 M659.30 349.50 L660.70 351.00 L659.30 352.50 M656.20 351.00 H660.60" stroke="#000" stroke-width="0.8" fill="none" stroke-linejoin="miter"/>
<rect x="655.60" y="358.10" width="5.60" height="5.80" fill="#f4f0c4" stroke="#d4c86c" stroke-width="1"/>
<path d="M659.10 359.50 L660.60 361.00 L659.10 362.50 M656.30 361.00 H660.50" stroke="#000" stroke-width="0.7" fill="none"/>
<rect x="732.80" y="336.50" width="5.60" height="5.80" fill="#f4f0c4" stroke="#d4c86c" stroke-width="1"/>
<path d="M734.70 337.90 L733.30 339.40 L734.70 340.90 M736.50 337.90 L737.90 339.40 L736.50 340.90 M733.40 339.40 H737.80" stroke="#000" stroke-width="0.8" fill="none" stroke-linejoin="miter"/>
<rect x="732.80" y="359.30" width="5.60" height="5.40" fill="#f8e1e7" stroke="#d66484" stroke-width="1.1"/>
<rect x="732.80" y="367.70" width="5.60" height="5.80" fill="#f4f0c4" stroke="#d4c86c" stroke-width="1"/>
<path d="M734.70 369.10 L733.30 370.60 L734.70 372.10 M736.50 369.10 L737.90 370.60 L736.50 372.10 M733.40 370.60 H737.80" stroke="#000" stroke-width="0.8" fill="none" stroke-linejoin="miter"/>
<rect x="759.80" y="336.50" width="5.60" height="5.80" fill="#f4f0c4" stroke="#d4c86c" stroke-width="1"/>
<path d="M761.70 337.90 L760.30 339.40 L761.70 340.90 M763.50 337.90 L764.90 339.40 L763.50 340.90 M760.40 339.40 H764.80" stroke="#000" stroke-width="0.8" fill="none" stroke-linejoin="miter"/>
<rect x="867.20" y="348.70" width="5.60" height="5.80" fill="#f4f0c4" stroke="#d4c86c" stroke-width="1"/>
<path d="M869.10 350.10 L867.70 351.60 L869.10 353.10 M870.90 350.10 L872.30 351.60 L870.90 353.10 M867.80 351.60 H872.20" stroke="#000" stroke-width="0.8" fill="none" stroke-linejoin="miter"/>
<rect x="755.80" y="402.70" width="5.60" height="5.80" fill="#f4f0c4" stroke="#d4c86c" stroke-width="1"/>
<path d="M757.70 404.10 L756.30 405.60 L757.70 407.10 M759.50 404.10 L760.90 405.60 L759.50 407.10 M756.40 405.60 H760.80" stroke="#000" stroke-width="0.8" fill="none" stroke-linejoin="miter"/>
<rect x="854.80" y="402.50" width="5.60" height="5.80" fill="#f4f0c4" stroke="#d4c86c" stroke-width="1"/>
<path d="M856.70 403.90 L855.30 405.40 L856.70 406.90 M858.50 403.90 L859.90 405.40 L858.50 406.90 M855.40 405.40 H859.80" stroke="#000" stroke-width="0.8" fill="none" stroke-linejoin="miter"/>
<rect x="854.80" y="412.30" width="5.60" height="5.40" fill="#f8e1e7" stroke="#d66484" stroke-width="1.1"/>
<rect x="755.20" y="442.30" width="5.60" height="5.40" fill="#f8e1e7" stroke="#d66484" stroke-width="1.1"/>
<rect x="755.20" y="452.50" width="5.60" height="5.80" fill="#f4f0c4" stroke="#d4c86c" stroke-width="1"/>
<path d="M757.10 453.90 L755.70 455.40 L757.10 456.90 M758.90 453.90 L760.30 455.40 L758.90 456.90 M755.80 455.40 H760.20" stroke="#000" stroke-width="0.8" fill="none" stroke-linejoin="miter"/>
<rect x="755.20" y="462.70" width="5.60" height="5.80" fill="#f4f0c4" stroke="#d4c86c" stroke-width="1"/>
<path d="M757.10 464.10 L755.70 465.60 L757.10 467.10 M758.90 464.10 L760.30 465.60 L758.90 467.10 M755.80 465.60 H760.20" stroke="#000" stroke-width="0.8" fill="none" stroke-linejoin="miter"/>
<rect x="755.20" y="473.50" width="5.60" height="5.80" fill="#f4f0c4" stroke="#d4c86c" stroke-width="1"/>
<path d="M757.10 474.90 L755.70 476.40 L757.10 477.90 M758.90 474.90 L760.30 476.40 L758.90 477.90 M755.80 476.40 H760.20" stroke="#000" stroke-width="0.8" fill="none" stroke-linejoin="miter"/>
<rect x="755.20" y="483.70" width="5.60" height="5.40" fill="#f8e1e7" stroke="#d66484" stroke-width="1.1"/>
<rect x="851.80" y="458.30" width="5.60" height="5.40" fill="#f8e1e7" stroke="#d66484" stroke-width="1.1"/>
</g>
<circle cx="998.6" cy="85.6" r="18.4" fill="#e9e9e9" fill-opacity="0.8"/>
<path d="M995.2 75.0 L998.6 71.8 L1002.0 75.0" stroke="#a0a0a0" stroke-width="1.4" fill="none"/>
<path d="M995.2 95.8 L998.6 99.0 L1002.0 95.8" stroke="#a0a0a0" stroke-width="1.4" fill="none"/>
<path d="M987.2 82.0 L984.0 85.39999999999999 L987.2 88.8" stroke="#a0a0a0" stroke-width="1.4" fill="none"/>
<path d="M1010.0 82.0 L1013.2 85.39999999999999 L1010.0 88.8" stroke="#a0a0a0" stroke-width="1.4" fill="none"/>
<circle cx="998.6" cy="85.39999999999999" r="2.5" fill="none" stroke="#a0a0a0" stroke-width="1.2"/>
<circle cx="998.6" cy="85.39999999999999" r="0.7" fill="#a0a0a0" fill-opacity="0.6"/>
<path d="M996.0 81.0 A4.9 4.9 0 0 0 996.0 89.8 M1001.2 81.0 A4.9 4.9 0 0 1 1001.2 89.8" stroke="#a0a0a0" stroke-width="1.3" fill="none"/>
<circle cx="999.6" cy="120.4" r="11.3" fill="#e9e9e9" fill-opacity="0.8"/>
<circle cx="999.6" cy="147.0" r="11.3" fill="#e9e9e9" fill-opacity="0.8"/>
<circle cx="999.6" cy="174.2" r="11.3" fill="#e9e9e9" fill-opacity="0.8"/>
<path d="M993.8000000000001 120.8 H1005.4 M999.6 115 V126.6" stroke="#a0a0a0" stroke-width="2.3"/>
<path d="M993.8000000000001 147 H1005.4" stroke="#a0a0a0" stroke-width="2.5"/>
<path d="M994.0 172.2 V169.6 H997.0 M1002.2 169.6 H1005.2 V172.2 M994.0 175.8 V178.4 H997.0 M1002.2 178.4 H1005.2 V175.8" stroke="#a0a0a0" stroke-width="1.6" fill="none"/>
</svg></body></html>
